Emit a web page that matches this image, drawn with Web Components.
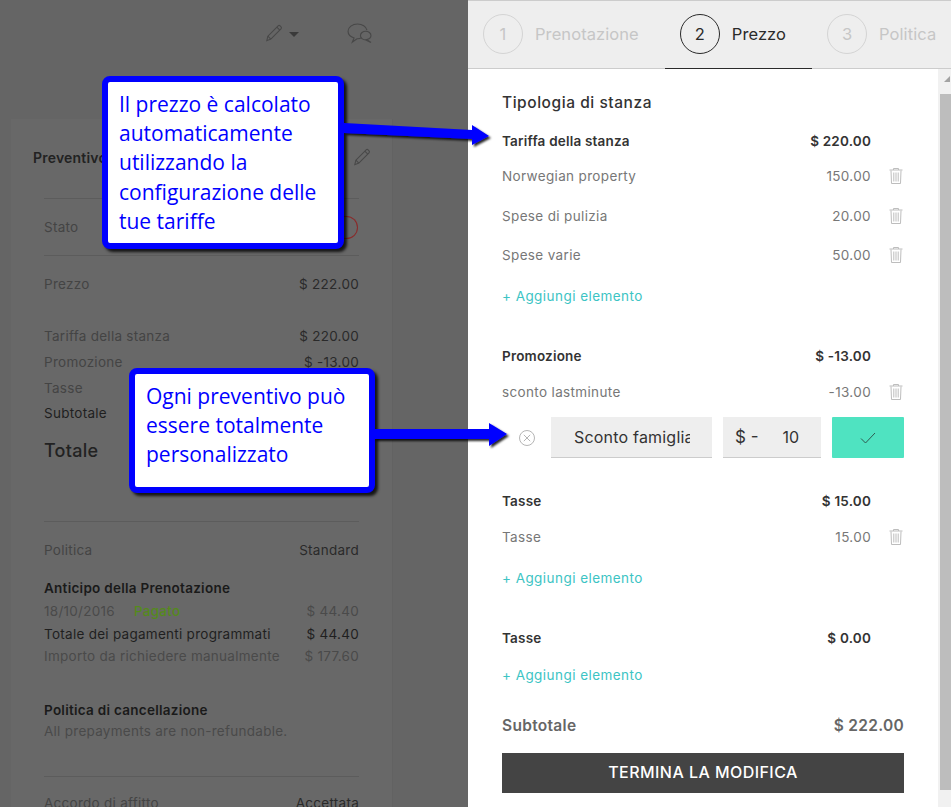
<!DOCTYPE html>
<html lang="it"><head><meta charset="utf-8"><title>Preventivo</title>
<style>
html,body{margin:0;padding:0;height:807px;overflow:hidden;background:#fff}
body{font-family:"Inter","Liberation Sans",sans-serif;font-size:13px}
</style></head><body>
<quote-app>
  <quote-summary slot="left"></quote-summary>
  <quote-editor slot="right"></quote-editor>
  <call-out slot="over" style="left:102px;top:76px;width:242px;height:173px">Il prezzo è calcolato automaticamente utilizzando la configurazione delle tue tariffe</call-out>
  <call-out slot="over" style="left:129px;top:368px;width:246px;height:125px">Ogni preventivo può essere totalmente personalizzato</call-out>
  <arrow-marks slot="over"></arrow-marks>
</quote-app>
<script>
const ICONS={
 pencil:'<svg width="18" height="18" viewBox="0 0 20 20" fill="none" stroke="currentColor" stroke-width="1.2"><path d="M2 18.5l1.2-5L14.6 2.1a1.6 1.6 0 0 1 2.2 0l1 1a1.6 1.6 0 0 1 0 2.2L6.500 16.800z"/><path d="M3.200 13.500l3.300 3.300M13.200 3.500l3.200 3.200"/></svg>',
 chat:'<svg width="25" height="21" viewBox="0 0 26 22" fill="none" stroke="currentColor" stroke-width="1.2"><path d="M15 15.500c-1.400.8-3 1.100-4.600 1l-4.900 3.500 1.800-4.300C3.400 14.500 1 11.800 1 8.700 1 4.400 5.500 1 11 1c4.900 0 9 2.700 9.800 6.400"/><path d="M20.500 17.300c2.600-.4 4.500-2.100 4.500-4.200 0-2.500-2.500-4.500-5.500-4.500s-5.500 2-5.500 4.500 2.500 4.600 5.500 4.600l5.500 2.800z"/></svg>',
 trash:'<svg width="14" height="17" viewBox="0 0 14 17" fill="none" stroke="currentColor" stroke-width="1"><path d="M.5 3h13M4.500 3V1.500h5V3M2 3.500l.5 13h9l.5-13M4.800 5.500v9M7 5.500v9M9.200 5.500v9"/></svg>',
 close:'<svg width="16" height="16" viewBox="0 0 16 16" fill="none" stroke="currentColor" stroke-width="1"><circle cx="8" cy="8" r="7.500"/><path d="M4.800 4.800l6.400 6.400M11.200 4.800l-6.400 6.400"/></svg>',
 check:'<svg width="16" height="12" viewBox="0 0 16 12" fill="none" stroke="#2f5a50" stroke-width="1"><path d="M1 6.500l4.500 4.500L15 1"/></svg>'
};
function def(name,css,html){
  customElements.define(name,class extends HTMLElement{
    constructor(){super();this.attachShadow({mode:'open'});}
    connectedCallback(){
      const a=n=>this.getAttribute(n)||'';
      if(a('mt'))this.style.marginTop=a('mt')+'px';
      this.shadowRoot.innerHTML='<style>'+css+'</style>'+(typeof html==='function'?html(a):html);
    }
  });
}
def('quote-app',`:host{display:flex;width:951px;height:807px;position:relative;overflow:hidden}
 .l{display:block;width:468px;flex:none}.r{display:block;width:483px;flex:none}`,
 `<div class="l"><slot name="left"></slot></div><div class="r"><slot name="right"></slot></div><slot name="over"></slot>`);

def('quote-summary',`:host{display:block;height:807px;background:#656565;overflow:hidden;color:#262626}
 .top{height:119px;box-sizing:border-box;padding:24px 0 0 265px;display:flex;align-items:flex-start;color:#484848}
 .tri{width:0;height:0;border:5px solid transparent;border-top:5px solid #3a3a3a;border-bottom:0;margin:8px 0 0 6px}
 .chat{margin:-1px 0 0 48px}
 .card{margin-left:11px;width:382px;height:720px;box-sizing:border-box;background:#686868;padding:29px 33px 0 33px;border-right:1px solid #626262}
 .title{display:flex;justify-content:space-between;height:20px;line-height:20px;font-weight:600;color:#222;font-size:14px;letter-spacing:.2px;margin:0 -12px 0 -11px}
 .title span{display:flex}
 .title span+span{color:#484848}
 hr{border:0;height:1px;background:#5c5c5c;margin:0}
 .status{position:absolute;left:341px;top:216px;width:16px;height:21px;border:1px solid #8a2a2a;border-left:0;border-radius:0 12px 12px 0}
`,`<div class="top">${ICONS.pencil}<i class="tri"></i><span class="chat">${ICONS.chat}</span></div>
<div class="card">
 <div class="title"><span>Preventivo</span><span>${ICONS.pencil}</span></div>
 <hr style="margin-top:30px">
 <sum-row mt="18" label="Stato"></sum-row>
 <hr style="margin-top:18px">
 <sum-row mt="18" label="Prezzo" value="$ 222.00"></sum-row>
 <sum-row mt="32" label="Tariffa della stanza" value="$ 220.00"></sum-row>
 <sum-row mt="6" label="Promozione" value="$ -13.00"></sum-row>
 <sum-row mt="6" label="Tasse"></sum-row>
 <sum-row mt="5" label="Subtotale" kind="dark"></sum-row>
 <sum-row mt="12" label="Totale" kind="big"></sum-row>
 <hr style="margin-top:56px">
 <sum-row mt="18" label="Politica" value="Standard"></sum-row>
 <sum-row mt="18" label="Anticipo della Prenotazione" kind="head"></sum-row>
 <sum-row mt="3" label="18/10/2016" tag="Pagato" value="$ 44.40" kind="faint"></sum-row>
 <sum-row mt="3" label="Totale dei pagamenti programmati" value="$ 44.40" kind="dark"></sum-row>
 <sum-row mt="2" label="Importo da richiedere manualmente" value="$ 177.60" kind="faint"></sum-row>
 <sum-row mt="34" label="Politica di cancellazione" kind="head"></sum-row>
 <sum-row mt="1" label="All prepayments are non-refundable." kind="faint"></sum-row>
 <hr style="margin-top:35px">
 <sum-row mt="16" label="Accordo di affitto" value="Accettata"></sum-row>
</div><i class="status"></i>`);

def('sum-row',`:host{display:flex;justify-content:space-between;height:20px;line-height:20px;white-space:nowrap;color:#444;font-size:13.500px;letter-spacing:.27px}
 .v{color:#2a2a2a}
 .tag{color:#558a1c;font-weight:500;margin-left:19px}
 :host([kind=dark]) .k,:host([kind=dark]) .v{color:#1f1f1f}
 :host([kind=faint]) .k,:host([kind=faint]) .v{color:#4a4a4a}
 :host([kind=head]) .k{color:#1a1a1a;font-weight:600}
 :host([kind=big]){height:30px;line-height:32px}
 :host([kind=big]) .k{color:#222;font-size:18px;font-weight:500}
`,a=>`<span class="k">${a('label')}${a('tag')?`<span class="tag">${a('tag')}</span>`:''}</span><span class="v">${a('value')}</span>`);

def('step-tab',`:host{display:flex;flex:none;align-items:center;box-sizing:border-box;height:68px;padding:0 26px 2px 15px;color:#c6c6c6;font-size:16.500px;letter-spacing:.08px;white-space:nowrap}
 :host([active]){color:#2a2a2a;box-shadow:inset 0 -1px 0 #2a2a2a}
 b{font-weight:400;display:flex;align-items:center;justify-content:center;width:40px;height:40px;box-sizing:border-box;border:1px solid #d4d4d4;border-radius:50%;margin-right:12px}
 :host([active]) b{border-color:#2a2a2a}
`,a=>`<b>${a('n')}</b><span>${a('label')}</span>`);

def('quote-editor',`:host{display:block;height:807px;background:#fff;position:relative;overflow:hidden}
 .tabs{display:flex;height:69px;background:#eee;border-top:1px solid #ccc;box-sizing:border-box;box-shadow:inset 0 -1px 0 #ccc;overflow:hidden}
 .pane{display:flex;height:738px}
 .body{width:470px;box-sizing:border-box;padding:0 34px;flex:none;overflow:hidden}
 .sb{width:13px;flex:none;background:#f1f1f1;display:flex;flex-direction:column;align-items:flex-end}
 .up{width:0;height:0;margin:7px 1px 0 0;border-left:6px solid transparent;border-bottom:6px solid #a3a3a3}
 .th{width:11px;height:696px;margin-top:12px;background:#bdbdbd}
 h2{margin:24px 0 0;font-size:15.500px;font-weight:500;height:20px;line-height:20px;color:#333;letter-spacing:.55px}
 .add{display:block;height:20px;line-height:20px;color:#3cc4c4;font-size:13.500px;letter-spacing:.45px}
 .edit{display:flex;height:41px;margin-top:15px}
 .x{width:49px;flex:none;display:flex;align-items:center;padding-left:17px;box-sizing:border-box;color:#b5b5b5}
 .inp{background:#eee;border-bottom:1px solid #ccc;font-size:16px;color:#333;display:flex;align-items:center;box-sizing:border-box;white-space:nowrap;overflow:hidden}
 .a{width:161px;padding:0 22px 1px 23px;letter-spacing:.2px}.a span{overflow:hidden}
 .b{width:98px;margin-left:11px;padding:0 22px 0 12px;justify-content:space-between;font-size:17px}
 .b span+span{font-size:16px}
 .ok{width:72px;margin-left:11px;background:#4fe3c1;border-radius:1px;display:flex;align-items:center;justify-content:center}
 .sub{display:flex;justify-content:space-between;height:20px;line-height:22px;margin-top:30px;font-size:15.500px;letter-spacing:.3px;font-weight:600;color:#666}
 .done{display:block;margin-top:18px;height:40px;line-height:38px;text-align:center;background:#444;color:#fff;font-size:16px;letter-spacing:.45px;font-weight:500}
`,`<div class="tabs"><step-tab n="1" label="Prenotazione"></step-tab><step-tab n="2" label="Prezzo" active></step-tab><step-tab n="3" label="Politica"></step-tab></div>
<div class="pane"><div class="body">
 <h2>Tipologia di stanza</h2>
 <line-item mt="18" head label="Tariffa della stanza" value="$ 220.00"></line-item>
 <line-item mt="15" label="Norwegian property" value="150.00"></line-item>
 <line-item mt="20" label="Spese di pulizia" value="20.00"></line-item>
 <line-item mt="19" label="Spese varie" value="50.00"></line-item>
 <span class="add" style="margin-top:21px">+ Aggiungi elemento</span>
 <line-item mt="40" head label="Promozione" value="$ -13.00"></line-item>
 <line-item mt="16" label="sconto lastminute" value="-13.00"></line-item>
 <div class="edit"><div class="x">${ICONS.close}</div><div class="inp a"><span>Sconto famiglia</span></div><div class="inp b"><span>$ -</span><span>10</span></div><div class="ok">${ICONS.check}</div></div>
 <line-item mt="33" head label="Tasse" value="$ 15.00"></line-item>
 <line-item mt="16" label="Tasse" value="15.00"></line-item>
 <span class="add" style="margin-top:21px">+ Aggiungi elemento</span>
 <line-item mt="40" head label="Tasse" value="$ 0.00"></line-item>
 <span class="add" style="margin-top:17px">+ Aggiungi elemento</span>
 <div class="sub"><span>Subtotale</span><span>$ 222.00</span></div>
 <span class="done">TERMINA LA MODIFICA</span>
</div><div class="sb"><i class="up"></i><i class="th"></i></div></div>`);

def('line-item',`:host{display:flex;height:20px;line-height:20px;color:#777;font-size:13.500px;letter-spacing:.35px;white-space:nowrap}
 .k{flex:1}.v{width:120px;text-align:right;margin-right:33px}
 .t{position:relative;width:0;color:#bdbdbd}
 svg{position:absolute;left:-15px;top:1px}
 :host([head]){color:#333;font-weight:600;letter-spacing:.2px}
`,a=>`<span class="k">${a('label')}</span><span class="v">${a('value')}</span>${a('value').indexOf('$')<0?`<span class="t">${ICONS.trash}</span>`:''}`);

def('call-out',`:host{position:absolute;display:block;box-sizing:border-box;background:#fff;border:6px solid #00f;border-radius:8px;box-shadow:3px 3px 3px rgba(0,0,0,.8);color:#00f;font-family:"Open Sans","Noto Sans",sans-serif;font-size:21px;line-height:29.200px;padding:8px 11px}`,`<slot></slot>`);

def('arrow-marks',`:host{position:absolute;left:0;top:0;width:951px;height:807px;display:block;pointer-events:none}
 svg{position:absolute;left:0;top:0}`,
 `<svg width="951" height="807" viewBox="0 0 951 807"><defs><filter id="s" x="-10%" y="-50%" width="120%" height="200%"><feDropShadow dx="2" dy="2" stdDeviation="1" flood-color="#000" flood-opacity=".85"/></filter></defs>
 <g fill="#00f" filter="url(#s)"><path d="M344 123L472 130V125L489 136L472 145V139L344 133z"/><path d="M374 429H489V423L507 434L489 446V439H374z"/></g></svg>`);
</script>
</body></html>
